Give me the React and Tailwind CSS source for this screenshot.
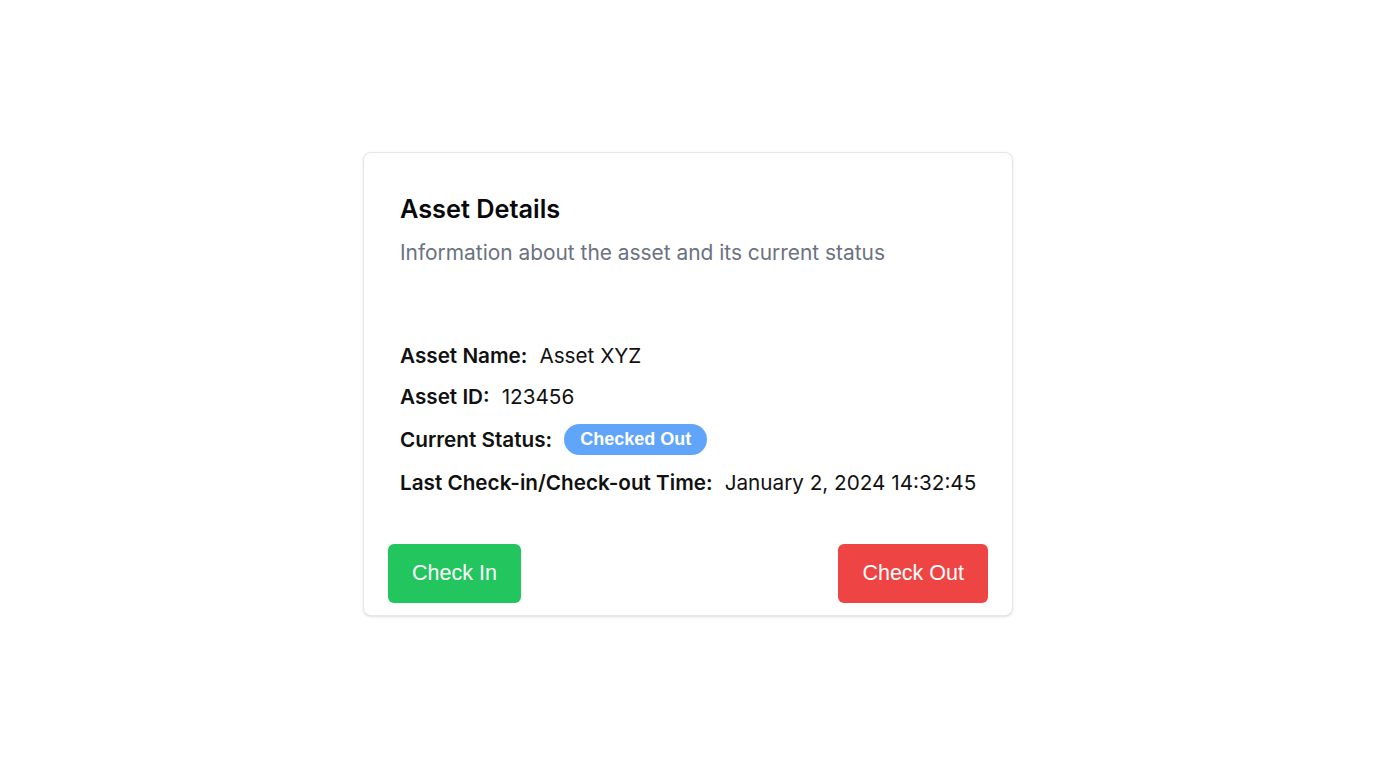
export default function App() {
  return (
    <div className="w-full h-screen flex items-center justify-center bg-white" style={{ fontFamily: 'Inter, "Noto Sans", sans-serif' }}>
      <div className="w-[650px] h-[464px] bg-white border border-gray-200 rounded-lg shadow-sm flex flex-col">
        <div className="px-9 pt-[40px]">
          <h2 className="text-[25.3px] leading-8 font-semibold text-[#09090b]">Asset Details</h2>
          <p className="mt-[14px] text-[20.9px] leading-7 text-[#6b7280]">Information about the asset and its current status</p>
        </div>
        <div className="px-9 mt-[74px] flex flex-col gap-3 text-[20.7px] text-[#111111] whitespace-nowrap">
          <div className="h-[29px] flex items-center">
            <span className="font-semibold">Asset Name:</span>
            <span className="ml-3">Asset XYZ</span>
          </div>
          <div className="h-[29px] flex items-center">
            <span className="font-semibold">Asset ID:</span>
            <span className="ml-3">123456</span>
          </div>
          <div className="h-[33px] flex items-center">
            <span className="font-semibold">Current Status:</span>
            <span className="ml-3 h-[31px] px-4 rounded-full bg-[#60a5fa] text-white font-bold text-[18px] flex items-center" style={{ fontFamily: '"Liberation Sans", Arial, sans-serif' }}>Checked Out</span>
          </div>
          <div className="h-[29px] flex items-center">
            <span className="font-semibold">Last Check-in/Check-out Time:</span>
            <span className="ml-3">January 2, 2024 14:32:45</span>
          </div>
        </div>
        <div className="mt-auto px-6 pb-3 flex justify-between" style={{ fontFamily: '"Liberation Sans", Arial, sans-serif' }}>
          <button className="h-[59px] px-6 rounded-md bg-[#22c55e] text-white text-[21.5px]">Check In</button>
          <button className="h-[59px] px-6 rounded-md bg-[#ef4444] text-white text-[21.5px]">Check Out</button>
        </div>
      </div>
    </div>
  );
}
